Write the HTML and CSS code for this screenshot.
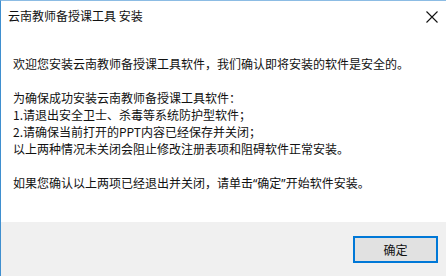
FILE: index.html
```html
<!DOCTYPE html>
<html lang="zh-CN">
<head>
  <meta charset="UTF-8">
  <title>云南教师备授课工具 安装</title>
  <link rel="stylesheet" href="styles.css">
</head>
<body>
  <div class="dialog">
    <!-- Title bar -->
    <div class="title-bar">
      <div class="title-text">云南教师备授课工具 安装</div>
      <div class="close-btn">
        <svg width="12" height="12" viewBox="0 0 12 12">
          <path d="M0.5 0.5 L11.5 11.5 M11.5 0.5 L0.5 11.5" stroke="#111" stroke-width="1.1" fill="none"/>
        </svg>
      </div>
    </div>
    <!-- Message -->
    <div class="content">
      <p class="line">欢迎您安装云南教师备授课工具软件，我们确认即将安装的软件是安全的。</p>
      <p class="line blank"></p>
      <p class="line">为确保成功安装云南教师备授课工具软件：</p>
      <p class="line">1.请退出安全卫士、杀毒等系统防护型软件；</p>
      <p class="line">2.请确保当前打开的PPT内容已经保存并关闭；</p>
      <p class="line">以上两种情况未关闭会阻止修改注册表项和阻碍软件正常安装。</p>
      <p class="line blank"></p>
      <p class="line">如果您确认以上两项已经退出并关闭，请单击<span class="quote">“</span>确定<span class="quote">”</span>开始软件安装。</p>
    </div>
    <!-- Footer -->
    <div class="footer">
      <button class="ok-btn">确定</button>
    </div>
  </div>
</body>
</html>
```

FILE: styles.css
```css
html, body {
  margin: 0;
  padding: 0;
  height: 100%;
}
body {
  background: #fff;
  font-family: "Noto Sans CJK SC", "Noto Sans", sans-serif;
  font-size: 12px;
  color: #111;
}
.dialog {
  width: 446px;
  height: 276px;
  box-sizing: border-box;
  border-left: 1px solid #3f8fcf;
  border-top: 1px solid #8cbce4;
  display: flex;
  flex-direction: column;
  background: #fff;
}
.title-bar {
  height: 29px;
  display: flex;
  align-items: center;
  justify-content: space-between;
  padding: 0 6px 0 7px;
}
.title-text {
  font-size: 12px;
  line-height: 14px;
  margin-top: 1px;
}
.close-btn {
  width: 16px;
  height: 16px;
  display: flex;
  align-items: center;
  justify-content: center;
  margin-top: 2px;
}
.content {
  flex: 1;
  padding: 25px 0 0 12px;
}
.line {
  margin: 0;
  height: 17px;
  line-height: 17px;
  white-space: nowrap;
}
.quote {
  font-family: "Noto Sans", sans-serif;
}
.footer {
  height: 54px;
  background: #f0f0f0;
  display: flex;
  justify-content: flex-end;
  align-items: flex-start;
  padding: 14px 8px 0 0;
  box-sizing: border-box;
}
.ok-btn {
  width: 85px;
  height: 27px;
  background: #e1e1e1;
  border: 2px solid #0078d7;
  border-radius: 0;
  font-family: "Noto Sans CJK SC", sans-serif;
  font-size: 12px;
  color: #111;
  padding: 0;
}
```
